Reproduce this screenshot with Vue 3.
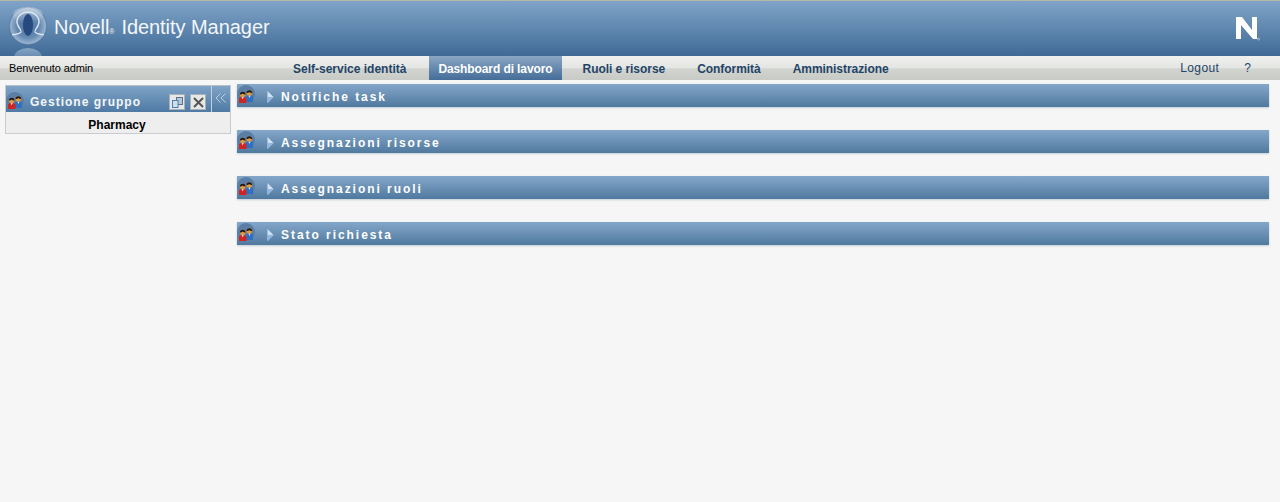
<template>
  <div class="page">
    <header class="masthead">
      <div class="brand">
        <svg class="brand-logo" width="48" height="55" viewBox="0 0 48 55">
          <defs>
            <radialGradient id="orb" cx="50%" cy="50%" r="52%">
              <stop offset="0" stop-color="#4a6f9e" />
              <stop offset="0.6" stop-color="#668ab2" />
              <stop offset="0.88" stop-color="#96b2cf" />
              <stop offset="1" stop-color="#2f527c" />
            </radialGradient>
            <linearGradient id="shine" x1="0" y1="0" x2="0" y2="1">
              <stop offset="0" stop-color="#fff" stop-opacity="0.45" />
              <stop offset="1" stop-color="#fff" stop-opacity="0" />
            </linearGradient>
            <linearGradient id="mirror" x1="0" y1="0" x2="0" y2="1">
              <stop offset="0" stop-color="#86a5c4" />
              <stop offset="1" stop-color="#4a7099" />
            </linearGradient>
          </defs>
          <ellipse cx="28" cy="56" rx="14" ry="9" fill="url(#mirror)" />
          <circle cx="28" cy="25" r="19" fill="url(#orb)" />
          <ellipse cx="28" cy="14" rx="15" ry="8" fill="url(#shine)" />
          <ellipse cx="28" cy="24" rx="5" ry="11" fill="#264a80" />
          <path d="M21 31c1-3-5-5-4-12 1-5 6-8 11-8s10 3 11 8c1 7-5 9-4 12" fill="none" stroke="#dfe9f2" stroke-width="1.3" />
          <path d="M12 34c4-1 8-1 9-3M44 34c-4-1-8-1-9-3" fill="none" stroke="#dfe9f2" stroke-width="1.2" />
        </svg>
        <span class="brand-name">Novell<small>®</small>Identity Manager</span>
      </div>
      <svg class="n-mark" width="26" height="26" viewBox="0 0 26 26">
        <path d="M1 2h6l10 13V2h5v22h-4L6 10v14H1z" fill="#fff" />
        <circle cx="23.500" cy="24" r="1" fill="none" stroke="#d6e2ee" stroke-width="0.6" />
      </svg>
    </header>

    <nav class="navbar">
      <span class="welcome">Benvenuto admin</span>
      <div class="tabs">
        <a v-for="tab in tabs" :key="tab" class="tab" :class="{ active: tab === activeTab }">{{ tab }}</a>
      </div>
      <div class="links">
        <a class="logout">Logout</a>
        <a class="help">?</a>
      </div>
    </nav>

    <main class="content">
      <aside class="sidebar">
        <div class="side-card">
          <div class="side-head">
            <span class="badge side-badge">
              <svg class="people" width="14" height="14" viewBox="0 0 14 14">
                <use href="#people-icon" />
              </svg>
            </span>
            <span class="side-title">Gestione gruppo</span>
            <button class="tool-btn">
              <svg width="13" height="13" viewBox="0 0 13 13">
                <rect x="5.500" y="1.500" width="6" height="7" fill="#b9c5d0" stroke="#55748f" />
                <rect x="1.500" y="4.500" width="5.500" height="7" fill="#cfdfee" stroke="#4c7fae" />
              </svg>
            </button>
            <button class="tool-btn">
              <svg width="13" height="13" viewBox="0 0 13 13">
                <path d="M2 2l9 9M11 2l-9 9" stroke="#555" stroke-width="2" fill="none" />
              </svg>
            </button>
            <div class="collapse">
              <svg width="12" height="10" viewBox="0 0 12 10">
                <path d="M5.500 0.500L1 5l4.500 4.500M10.500 0.500L6 5l4.500 4.500" stroke="#b9cbdc" fill="none" />
              </svg>
            </div>
          </div>
          <div class="side-body">Pharmacy</div>
        </div>
      </aside>

      <section class="panels">
        <div v-for="panel in panels" :key="panel" class="panel">
          <span class="badge">
            <svg class="people" width="14" height="14" viewBox="0 0 14 14">
              <use href="#people-icon" />
            </svg>
          </span>
          <svg class="arrow" width="7" height="12" viewBox="0 0 7 12">
            <path d="M0.500 0v12L6.500 6z" fill="#cfe2f5" />
            <path d="M0.500 6v6L6.500 6z" fill="#8fb6de" />
          </svg>
          <span class="panel-title">{{ panel }}</span>
        </div>
      </section>
    </main>

    <svg width="0" height="0" class="defs">
      <defs>
        <g id="people-icon">
          <path d="M7 13V8c0-1 1.500-1.500 3.500-1.500S14 7 14 8v5z" fill="#2f6fc4" />
          <path d="M9.500 6.500h2l-1 2.500z" fill="#eee" />
          <circle cx="10.300" cy="4" r="2.700" fill="#e39a3c" />
          <path d="M7.500 4a2.800 2.800 0 0 1 5.600 0c-1 0-2.200-.4-2.800-1-.6.6-1.800 1-2.800 1z" fill="#1f1a18" />
          <path d="M0 14V9.500c0-1 1.700-1.500 3.700-1.500s3.700.5 3.700 1.500V14z" fill="#cf2420" />
          <path d="M2.700 8h2l-1 2.500z" fill="#eee" />
          <circle cx="3.700" cy="5.500" r="2.700" fill="#e39a3c" />
          <path d="M.9 5.500a2.800 2.800 0 0 1 5.600 0c-1 0-2.200-.4-2.800-1-.6.6-1.800 1-2.800 1z" fill="#1f1a18" />
        </g>
      </defs>
    </svg>
  </div>
</template>

<script setup>
const tabs = [
  'Self-service identità',
  'Dashboard di lavoro',
  'Ruoli e risorse',
  'Conformità',
  'Amministrazione'
]
const activeTab = 'Dashboard di lavoro'

const panels = [
  'Notifiche task',
  'Assegnazioni risorse',
  'Assegnazioni ruoli',
  'Stato richiesta'
]
</script>

<style>
html,
body {
  background: #f6f6f6;
}
</style>

<style scoped>
.page {
  height: 502px;
  overflow: hidden;
  background: #f6f6f6;
  font-family: "Liberation Sans", Arial, sans-serif;
}

.defs {
  display: block;
  height: 0;
}

.masthead {
  height: 55px;
  display: flex;
  align-items: flex-start;
  justify-content: space-between;
  border-top: 1px solid #b5b5a5;
  background: linear-gradient(#80a4c8, #3f6a96);
  overflow: hidden;
}

.brand {
  display: flex;
  align-items: flex-start;
}

.brand-logo {
  flex: none;
}

.brand-name {
  margin: 14px 0 0 6px;
  font-size: 20px;
  line-height: 24px;
  letter-spacing: -0.05px;
  color: #f4f7fa;
  white-space: nowrap;
}

.brand-name small {
  font-size: 7px;
  margin: 0 7px 0 0;
}

.n-mark {
  margin: 14px 19px 0 0;
}

.navbar {
  height: 24px;
  display: flex;
  align-items: stretch;
  background: linear-gradient(#f0f1ef 0, #e4e6e3 48%, #d2d4d0 54%, #c8cac6 100%);
  font-size: 11px;
  line-height: 24px;
}

.welcome {
  width: 283px;
  padding-left: 9px;
  box-sizing: border-box;
  letter-spacing: -0.1px;
  color: #000;
  flex: none;
}

.tabs {
  display: flex;
  flex: 1;
}

.tab {
  padding: 2px 10px 0;
  margin-right: 12px;
  line-height: 22px;
  font-size: 12px;
  font-weight: bold;
  color: #1f4467;
  white-space: nowrap;
}

.tab:nth-child(n + 2) {
  letter-spacing: -0.05px;
}

.tab.active {
  padding-left: 9px;
  padding-right: 9px;
  margin-left: 1px;
  margin-right: 11px;
  letter-spacing: -0.1px;
  color: #fff;
  background: linear-gradient(#8aa6c4, #456d99);
}

.links {
  display: flex;
  color: #1f4467;
  font-size: 12px;
  flex: none;
}

.logout {
  margin-right: 25px;
  letter-spacing: 0.4px;
}

.help {
  margin-right: 29px;
}

.content {
  display: flex;
  align-items: flex-start;
  padding-left: 5px;
}

.sidebar {
  width: 226px;
  margin-top: 5px;
  flex: none;
}

.side-card {
  border: 1px solid #c8ccd0;
  border-top-color: #b8bfc6;
  background: #eeeeee;
}

.side-head {
  height: 26px;
  display: flex;
  align-items: center;
  background: linear-gradient(#7fa3c6, #4f7aa4);
}

.badge {
  width: 18px;
  height: 19px;
  padding: 3px 2px 1px;
  box-sizing: border-box;
  border-radius: 50%;
  background: #5b7ea6;
  display: flex;
  align-items: center;
  justify-content: center;
  flex: none;
}

.side-badge {
  margin-top: 4px;
}

.people {
  display: block;
  flex: none;
}

.side-title {
  flex: 1;
  margin: 5px 0 0 6px;
  font-size: 12px;
  font-weight: bold;
  letter-spacing: 1px;
  color: #f4f7fa;
  white-space: nowrap;
}

.tool-btn {
  width: 16px;
  height: 16px;
  padding: 0;
  margin: 6px 0 0 5px;
  display: flex;
  align-items: center;
  justify-content: center;
  border: 1px solid #a9b2ba;
  background: #e6e8e6;
}

.collapse {
  width: 19px;
  height: 26px;
  margin-left: 5px;
  display: flex;
  justify-content: center;
  padding-top: 7px;
  box-sizing: border-box;
  border-left: 1px solid #c3cfda;
  flex: none;
}

.side-body {
  height: 21px;
  padding: 3px 2px 0 0;
  box-sizing: border-box;
  line-height: 20px;
  text-align: center;
  font-size: 12px;
  font-weight: bold;
  color: #000;
}

.panels {
  flex: 1;
  margin: 4px 11px 0 6px;
  display: flex;
  flex-direction: column;
  gap: 23px;
}

.panel {
  height: 23px;
  display: flex;
  align-items: center;
  background: linear-gradient(#84a7c9, #50799f);
  box-shadow: 0 1px 2px #c4ccd4;
}

.panel .badge {
  align-self: flex-start;
  margin-top: 1px;
}

.arrow {
  margin: 2px 0 0 12px;
  flex: none;
}

.panel-title {
  margin: 2px 0 0 7px;
  font-size: 12px;
  font-weight: bold;
  letter-spacing: 1.95px;
  color: #fff;
}
</style>
